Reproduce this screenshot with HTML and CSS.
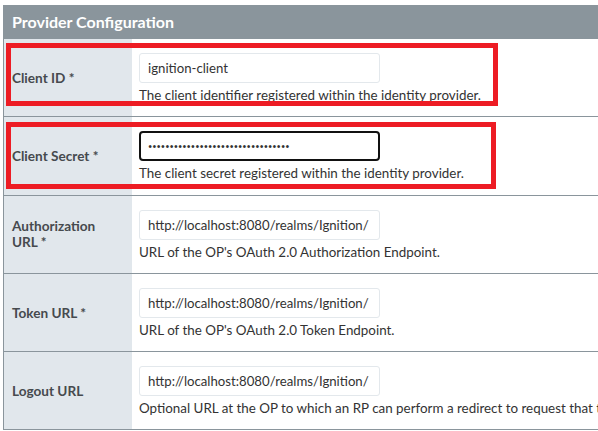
FILE: index.html
```html
<!DOCTYPE html>
<html lang="en">

<head>
    <meta charset="UTF-8">
    <title>Provider Configuration</title>
    <link rel="stylesheet" href="styles.css">
</head>

<body>

    <div id="config">
        <div class="config-header">Provider Configuration</div>

        <div class="config-row">
            <div class="config-label">Client ID *</div>
            <div class="config-value">
                <input class="config-input" type="text" value="ignition-client">
                <div class="config-desc">The client identifier registered within the identity provider.</div>
            </div>
        </div>

        <div class="config-row">
            <div class="config-label">Client Secret *</div>
            <div class="config-value">
                <input class="config-input focused" type="password" value="secretsecretsecretsecretsecretsec">
                <div class="config-desc">The client secret registered within the identity provider.</div>
            </div>
        </div>

        <div class="config-row">
            <div class="config-label">Authorization URL *</div>
            <div class="config-value">
                <input class="config-input" type="text" value="http://localhost:8080/realms/Ignition/">
                <div class="config-desc">URL of the OP's OAuth 2.0 Authorization Endpoint.</div>
            </div>
        </div>

        <div class="config-row">
            <div class="config-label">Token URL *</div>
            <div class="config-value">
                <input class="config-input" type="text" value="http://localhost:8080/realms/Ignition/">
                <div class="config-desc">URL of the OP's OAuth 2.0 Token Endpoint.</div>
            </div>
        </div>

        <div class="config-row">
            <div class="config-label">Logout URL</div>
            <div class="config-value">
                <input class="config-input" type="text" value="http://localhost:8080/realms/Ignition/">
                <div class="config-desc">Optional URL at the OP to which an RP can perform a redirect to request that the End-User be logged out at the OP.</div>
            </div>
        </div>

        <!-- highlight boxes drawn over the first two rows -->
        <div class="highlight" id="highlight1"></div>
        <div class="highlight" id="highlight2"></div>
    </div>

</body>

</html>
```

FILE: styles.css
```css
body {
    font-family: Lato, "Open Sans", sans-serif;
    margin: 0;
    padding: 0;
    overflow: hidden;
    background-color: #fff;
}

#config {
    position: relative;
    width: 595px;
    margin: 5px 0 0 3px;
    border-left: 1px solid #8a959c;
    overflow: hidden;
}

.config-header {
    background-color: #8a959c;
    color: #fff;
    font-weight: bold;
    font-size: 16px;
    height: 34px;
    line-height: 34px;
    padding-left: 8px;
}

.config-row {
    display: flex;
    height: 77.3px;
    border-bottom: 1px solid #8a959c;
}

.config-label {
    width: 104px;
    flex-shrink: 0;
    background-color: #e1e7ec;
    padding: 0 16px 0 8px;
    display: flex;
    align-items: center;
    font-size: 13.6px;
    font-weight: bold;
    color: #464a4e;
    line-height: 16px;
}

.config-value {
    padding: 14px 0 0 7px;
    min-width: 0;
}

.config-input {
    display: block;
    box-sizing: border-box;
    width: 241px;
    height: 30px;
    border: 1px solid #e3e8ec;
    border-radius: 3px;
    padding: 0 8px;
    font-family: Lato, sans-serif;
    font-size: 13.2px;
    color: #333;
    outline: none;
}

.config-input.focused {
    border: 2px solid #111;
    border-radius: 4px;
    padding: 0 7px;
    font-size: 7.4px;
}

.config-desc {
    margin-top: 4px;
    font-size: 13.4px;
    color: #333;
    white-space: nowrap;
}

.highlight {
    position: absolute;
    left: 2px;
    width: 482px;
    border: 5px solid #ed1c24;
}

#highlight1 {
    top: 38px;
    height: 53px;
}

#highlight2 {
    top: 117px;
    height: 57px;
    width: 480px;
}
```
